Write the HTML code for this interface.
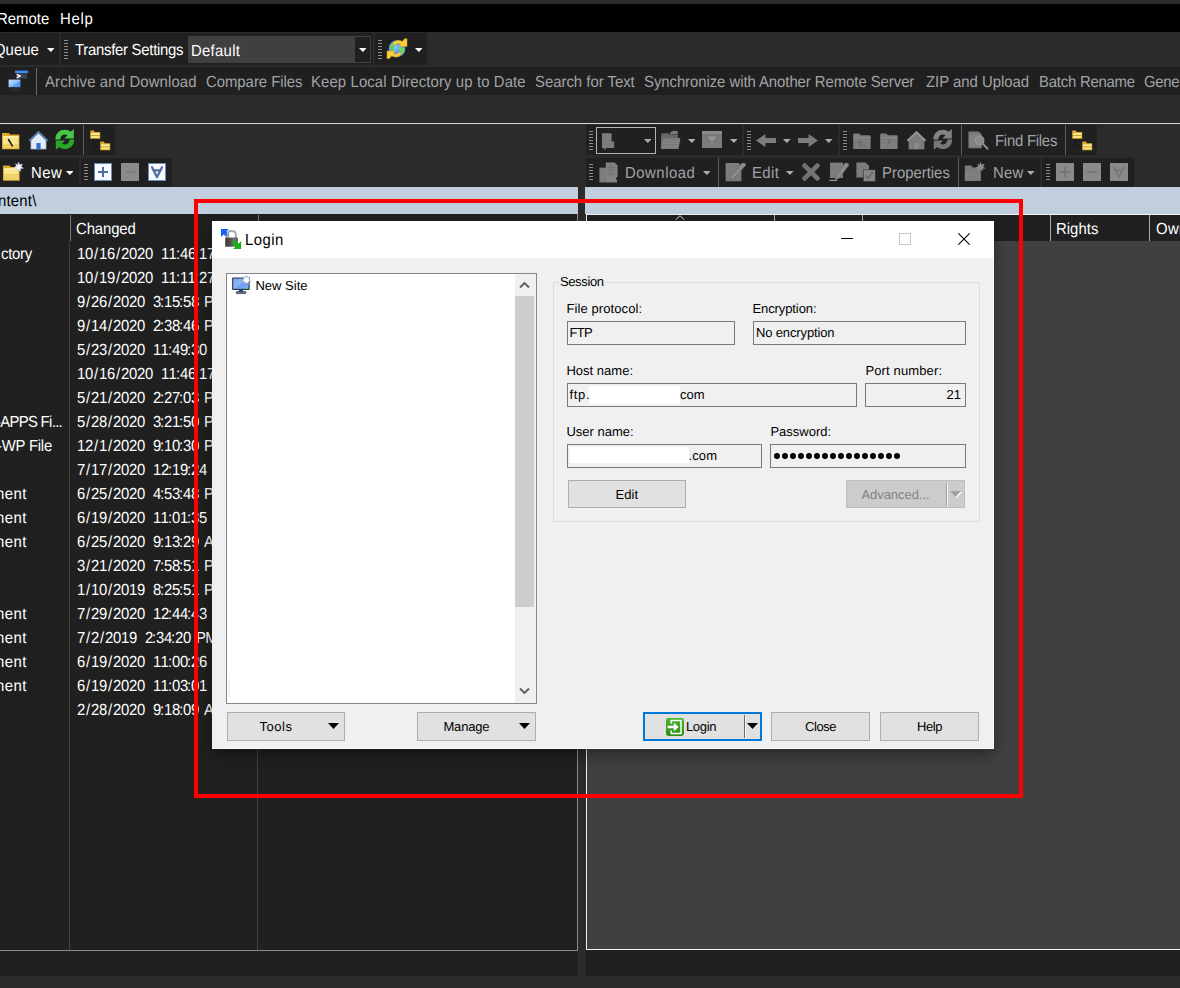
<!DOCTYPE html>
<html><head><meta charset="utf-8"><title>WinSCP Login</title>
<style>
html,body{margin:0;padding:0;}
body{width:1180px;height:988px;overflow:hidden;background:#2b2b2b;position:relative;font-family:"Liberation Sans", sans-serif;}
body div,body span,body svg{position:absolute;box-sizing:border-box;}
span{white-space:pre;text-rendering:geometricPrecision;}
</style></head><body>
<div style="left:0px;top:0px;width:1180px;height:4px;background:#2b2b2b;"></div>
<div style="left:0px;top:4px;width:1180px;height:28px;background:#000000;"></div>
<span style="left:-3.17px;top:12.00px;font-size:16px;line-height:16px;color:#ffffff;letter-spacing:0.049px;transform:scaleX(0.93);transform-origin:0 0;">Remote</span>
<span style="left:59.83px;top:12.00px;font-size:16px;line-height:16px;color:#ffffff;letter-spacing:0.802px;transform:scaleX(0.93);transform-origin:0 0;">Help</span>
<div style="left:0px;top:33px;width:59px;height:32px;background:#202020;"></div>
<div style="left:61px;top:33px;width:312px;height:32px;background:#202020;"></div>
<div style="left:375px;top:33px;width:52px;height:32px;background:#202020;"></div>
<span style="left:-6.17px;top:43.00px;font-size:16px;line-height:16px;color:#ffffff;letter-spacing:0.042px;transform:scaleX(0.93);transform-origin:0 0;">Queue</span>
<svg style="left:46.7px;top:48.0px;" width="7.6" height="4" viewBox="0 0 7.6 4"><polygon points="0,0 7.6,0 3.8,4" fill="#ffffff"/></svg>
<div style="left:64px;top:40px;width:4px;height:1px;background:#8c8c8c;"></div>
<div style="left:64px;top:43px;width:4px;height:1px;background:#8c8c8c;"></div>
<div style="left:64px;top:46px;width:4px;height:1px;background:#8c8c8c;"></div>
<div style="left:64px;top:49px;width:4px;height:1px;background:#8c8c8c;"></div>
<div style="left:64px;top:52px;width:4px;height:1px;background:#8c8c8c;"></div>
<div style="left:64px;top:55px;width:4px;height:1px;background:#8c8c8c;"></div>
<div style="left:64px;top:58px;width:4px;height:1px;background:#8c8c8c;"></div>
<span style="left:74.83px;top:43.00px;font-size:16px;line-height:16px;color:#ffffff;letter-spacing:-0.283px;transform:scaleX(0.93);transform-origin:0 0;">Transfer Settings</span>
<div style="left:188px;top:36px;width:183px;height:27px;background:#404040;"></div>
<div style="left:355px;top:37px;width:15px;height:25px;background:#202020;"></div>
<span style="left:190.93px;top:44.00px;font-size:16px;line-height:16px;color:#ffffff;letter-spacing:0.320px;transform:scaleX(0.93);transform-origin:0 0;">Default</span>
<svg style="left:358.7px;top:48.0px;" width="7.6" height="4" viewBox="0 0 7.6 4"><polygon points="0,0 7.6,0 3.8,4" fill="#ffffff"/></svg>
<div style="left:378px;top:40px;width:4px;height:1px;background:#8c8c8c;"></div>
<div style="left:378px;top:43px;width:4px;height:1px;background:#8c8c8c;"></div>
<div style="left:378px;top:46px;width:4px;height:1px;background:#8c8c8c;"></div>
<div style="left:378px;top:49px;width:4px;height:1px;background:#8c8c8c;"></div>
<div style="left:378px;top:52px;width:4px;height:1px;background:#8c8c8c;"></div>
<div style="left:378px;top:55px;width:4px;height:1px;background:#8c8c8c;"></div>
<div style="left:378px;top:58px;width:4px;height:1px;background:#8c8c8c;"></div>
<svg style="left:414.7px;top:48.0px;" width="7.6" height="4" viewBox="0 0 7.6 4"><polygon points="0,0 7.6,0 3.8,4" fill="#ffffff"/></svg>
<div style="left:0px;top:67px;width:1180px;height:28px;background:#202020;"></div>
<div style="left:36px;top:68px;width:1px;height:27px;background:#6a6a6a;"></div>
<span style="left:44.83px;top:75.00px;font-size:16px;line-height:16px;color:#a1a3a6;letter-spacing:0.150px;transform:scaleX(0.93);transform-origin:0 0;">Archive and Download</span>
<span style="left:205.83px;top:75.00px;font-size:16px;line-height:16px;color:#a1a3a6;letter-spacing:-0.019px;transform:scaleX(0.93);transform-origin:0 0;">Compare Files</span>
<span style="left:311.03px;top:75.00px;font-size:16px;line-height:16px;color:#a1a3a6;letter-spacing:0.133px;transform:scaleX(0.93);transform-origin:0 0;">Keep Local Directory up to Date</span>
<span style="left:535.43px;top:75.00px;font-size:16px;line-height:16px;color:#a1a3a6;letter-spacing:-0.005px;transform:scaleX(0.93);transform-origin:0 0;">Search for Text</span>
<span style="left:644.33px;top:75.00px;font-size:16px;line-height:16px;color:#a1a3a6;letter-spacing:-0.052px;transform:scaleX(0.93);transform-origin:0 0;">Synchronize with Another Remote Server</span>
<span style="left:925.73px;top:75.00px;font-size:16px;line-height:16px;color:#a1a3a6;letter-spacing:-0.007px;transform:scaleX(0.93);transform-origin:0 0;">ZIP and Upload</span>
<span style="left:1038.53px;top:75.00px;font-size:16px;line-height:16px;color:#a1a3a6;letter-spacing:-0.234px;transform:scaleX(0.93);transform-origin:0 0;">Batch Rename</span>
<span style="left:1144.33px;top:75.00px;font-size:16px;line-height:16px;color:#a1a3a6;letter-spacing:-0.286px;transform:scaleX(0.93);transform-origin:0 0;">General</span>
<div style="left:0px;top:123px;width:1180px;height:1px;background:#d6d6d6;"></div>
<div style="left:0px;top:125px;width:115px;height:30px;background:#202020;"></div>
<div style="left:83px;top:125px;width:1px;height:30px;background:#5e5e5e;"></div>
<div style="left:0px;top:158px;width:79px;height:29px;background:#202020;"></div>
<div style="left:81px;top:158px;width:91px;height:29px;background:#202020;"></div>
<span style="left:30.83px;top:166.00px;font-size:16px;line-height:16px;color:#ffffff;letter-spacing:0.572px;transform:scaleX(0.93);transform-origin:0 0;">New</span>
<svg style="left:65.7px;top:171.0px;" width="7.6" height="4" viewBox="0 0 7.6 4"><polygon points="0,0 7.6,0 3.8,4" fill="#ffffff"/></svg>
<div style="left:84px;top:164px;width:4px;height:1px;background:#8c8c8c;"></div>
<div style="left:84px;top:167px;width:4px;height:1px;background:#8c8c8c;"></div>
<div style="left:84px;top:170px;width:4px;height:1px;background:#8c8c8c;"></div>
<div style="left:84px;top:173px;width:4px;height:1px;background:#8c8c8c;"></div>
<div style="left:84px;top:176px;width:4px;height:1px;background:#8c8c8c;"></div>
<div style="left:84px;top:179px;width:4px;height:1px;background:#8c8c8c;"></div>
<div style="left:0px;top:187px;width:578px;height:27px;background:#c1cedd;"></div>
<span style="left:-1.67px;top:194.00px;font-size:16px;line-height:16px;color:#000000;letter-spacing:0.239px;transform:scaleX(0.93);transform-origin:0 0;">ntent\</span>
<div style="left:0px;top:214px;width:578px;height:737px;background:#202020;"></div>
<div style="left:69px;top:241px;width:1px;height:709px;background:#414143;"></div>
<div style="left:257px;top:241px;width:1px;height:709px;background:#414143;"></div>
<div style="left:70px;top:215px;width:1px;height:26px;background:#7c7c7c;"></div>
<div style="left:258px;top:215px;width:1px;height:26px;background:#7c7c7c;"></div>
<div style="left:577px;top:214px;width:1px;height:737px;background:#8c8c8c;"></div>
<div style="left:0px;top:950px;width:578px;height:1px;background:#8c8c8c;"></div>
<span style="left:76.33px;top:222.00px;font-size:16px;line-height:16px;color:#ffffff;letter-spacing:-0.102px;transform:scaleX(0.93);transform-origin:0 0;">Changed</span>
<span style="left:0.50px;top:247.00px;font-size:16px;line-height:16px;color:#ffffff;letter-spacing:-0.268px;transform:scaleX(0.93);transform-origin:0 0;">ctory</span>
<span style="left:77.00px;top:247.00px;font-size:16px;line-height:16px;color:#ffffff;letter-spacing:-0.296px;transform:scaleX(0.93);transform-origin:0 0;">10</span>
<span style="left:93.93px;top:247.00px;font-size:16px;line-height:16px;color:#ffffff;transform:scaleX(0.93);transform-origin:0 0;">/</span>
<span style="left:99.00px;top:247.00px;font-size:16px;line-height:16px;color:#ffffff;letter-spacing:-0.296px;transform:scaleX(0.93);transform-origin:0 0;">16</span>
<span style="left:115.93px;top:247.00px;font-size:16px;line-height:16px;color:#ffffff;transform:scaleX(0.93);transform-origin:0 0;">/</span>
<span style="left:121.00px;top:247.00px;font-size:16px;line-height:16px;color:#ffffff;letter-spacing:-0.296px;transform:scaleX(0.93);transform-origin:0 0;">2020</span>
<span style="left:161.00px;top:247.00px;font-size:16px;line-height:16px;color:#ffffff;letter-spacing:0.297px;transform:scaleX(0.93);transform-origin:0 0;">11</span>
<span style="left:176.43px;top:247.00px;font-size:16px;line-height:16px;color:#ffffff;transform:scaleX(0.93);transform-origin:0 0;">:</span>
<span style="left:180.00px;top:247.00px;font-size:16px;line-height:16px;color:#ffffff;letter-spacing:-0.296px;transform:scaleX(0.93);transform-origin:0 0;">46</span>
<span style="left:195.43px;top:247.00px;font-size:16px;line-height:16px;color:#ffffff;transform:scaleX(0.93);transform-origin:0 0;">:</span>
<span style="left:199.00px;top:247.00px;font-size:16px;line-height:16px;color:#ffffff;letter-spacing:-0.296px;transform:scaleX(0.93);transform-origin:0 0;">17</span>
<span style="left:219.80px;top:247.00px;font-size:16px;line-height:16px;color:#ffffff;letter-spacing:0.366px;transform:scaleX(0.93);transform-origin:0 0;">AM</span>
<span style="left:77.00px;top:271.00px;font-size:16px;line-height:16px;color:#ffffff;letter-spacing:-0.296px;transform:scaleX(0.93);transform-origin:0 0;">10</span>
<span style="left:93.93px;top:271.00px;font-size:16px;line-height:16px;color:#ffffff;transform:scaleX(0.93);transform-origin:0 0;">/</span>
<span style="left:99.00px;top:271.00px;font-size:16px;line-height:16px;color:#ffffff;letter-spacing:-0.296px;transform:scaleX(0.93);transform-origin:0 0;">19</span>
<span style="left:115.93px;top:271.00px;font-size:16px;line-height:16px;color:#ffffff;transform:scaleX(0.93);transform-origin:0 0;">/</span>
<span style="left:121.00px;top:271.00px;font-size:16px;line-height:16px;color:#ffffff;letter-spacing:-0.296px;transform:scaleX(0.93);transform-origin:0 0;">2020</span>
<span style="left:161.00px;top:271.00px;font-size:16px;line-height:16px;color:#ffffff;letter-spacing:0.297px;transform:scaleX(0.93);transform-origin:0 0;">11</span>
<span style="left:176.43px;top:271.00px;font-size:16px;line-height:16px;color:#ffffff;transform:scaleX(0.93);transform-origin:0 0;">:</span>
<span style="left:180.00px;top:271.00px;font-size:16px;line-height:16px;color:#ffffff;letter-spacing:0.297px;transform:scaleX(0.93);transform-origin:0 0;">11</span>
<span style="left:195.43px;top:271.00px;font-size:16px;line-height:16px;color:#ffffff;transform:scaleX(0.93);transform-origin:0 0;">:</span>
<span style="left:199.00px;top:271.00px;font-size:16px;line-height:16px;color:#ffffff;letter-spacing:-0.296px;transform:scaleX(0.93);transform-origin:0 0;">27</span>
<span style="left:219.80px;top:271.00px;font-size:16px;line-height:16px;color:#ffffff;letter-spacing:0.366px;transform:scaleX(0.93);transform-origin:0 0;">AM</span>
<span style="left:77.00px;top:295.00px;font-size:16px;line-height:16px;color:#ffffff;transform:scaleX(0.93);transform-origin:0 0;">9</span>
<span style="left:85.93px;top:295.00px;font-size:16px;line-height:16px;color:#ffffff;transform:scaleX(0.93);transform-origin:0 0;">/</span>
<span style="left:91.00px;top:295.00px;font-size:16px;line-height:16px;color:#ffffff;letter-spacing:-0.296px;transform:scaleX(0.93);transform-origin:0 0;">26</span>
<span style="left:107.93px;top:295.00px;font-size:16px;line-height:16px;color:#ffffff;transform:scaleX(0.93);transform-origin:0 0;">/</span>
<span style="left:113.00px;top:295.00px;font-size:16px;line-height:16px;color:#ffffff;letter-spacing:-0.296px;transform:scaleX(0.93);transform-origin:0 0;">2020</span>
<span style="left:153.00px;top:295.00px;font-size:16px;line-height:16px;color:#ffffff;transform:scaleX(0.93);transform-origin:0 0;">3</span>
<span style="left:160.43px;top:295.00px;font-size:16px;line-height:16px;color:#ffffff;transform:scaleX(0.93);transform-origin:0 0;">:</span>
<span style="left:164.00px;top:295.00px;font-size:16px;line-height:16px;color:#ffffff;letter-spacing:-0.296px;transform:scaleX(0.93);transform-origin:0 0;">15</span>
<span style="left:179.43px;top:295.00px;font-size:16px;line-height:16px;color:#ffffff;transform:scaleX(0.93);transform-origin:0 0;">:</span>
<span style="left:183.00px;top:295.00px;font-size:16px;line-height:16px;color:#ffffff;letter-spacing:-0.296px;transform:scaleX(0.93);transform-origin:0 0;">58</span>
<span style="left:203.80px;top:295.00px;font-size:16px;line-height:16px;color:#ffffff;letter-spacing:-0.710px;transform:scaleX(0.93);transform-origin:0 0;">PM</span>
<span style="left:77.00px;top:319.00px;font-size:16px;line-height:16px;color:#ffffff;transform:scaleX(0.93);transform-origin:0 0;">9</span>
<span style="left:85.93px;top:319.00px;font-size:16px;line-height:16px;color:#ffffff;transform:scaleX(0.93);transform-origin:0 0;">/</span>
<span style="left:91.00px;top:319.00px;font-size:16px;line-height:16px;color:#ffffff;letter-spacing:-0.296px;transform:scaleX(0.93);transform-origin:0 0;">14</span>
<span style="left:107.93px;top:319.00px;font-size:16px;line-height:16px;color:#ffffff;transform:scaleX(0.93);transform-origin:0 0;">/</span>
<span style="left:113.00px;top:319.00px;font-size:16px;line-height:16px;color:#ffffff;letter-spacing:-0.296px;transform:scaleX(0.93);transform-origin:0 0;">2020</span>
<span style="left:153.00px;top:319.00px;font-size:16px;line-height:16px;color:#ffffff;transform:scaleX(0.93);transform-origin:0 0;">2</span>
<span style="left:160.43px;top:319.00px;font-size:16px;line-height:16px;color:#ffffff;transform:scaleX(0.93);transform-origin:0 0;">:</span>
<span style="left:164.00px;top:319.00px;font-size:16px;line-height:16px;color:#ffffff;letter-spacing:-0.296px;transform:scaleX(0.93);transform-origin:0 0;">38</span>
<span style="left:179.43px;top:319.00px;font-size:16px;line-height:16px;color:#ffffff;transform:scaleX(0.93);transform-origin:0 0;">:</span>
<span style="left:183.00px;top:319.00px;font-size:16px;line-height:16px;color:#ffffff;letter-spacing:-0.296px;transform:scaleX(0.93);transform-origin:0 0;">46</span>
<span style="left:203.80px;top:319.00px;font-size:16px;line-height:16px;color:#ffffff;letter-spacing:-0.710px;transform:scaleX(0.93);transform-origin:0 0;">PM</span>
<span style="left:77.00px;top:343.00px;font-size:16px;line-height:16px;color:#ffffff;transform:scaleX(0.93);transform-origin:0 0;">5</span>
<span style="left:85.93px;top:343.00px;font-size:16px;line-height:16px;color:#ffffff;transform:scaleX(0.93);transform-origin:0 0;">/</span>
<span style="left:91.00px;top:343.00px;font-size:16px;line-height:16px;color:#ffffff;letter-spacing:-0.296px;transform:scaleX(0.93);transform-origin:0 0;">23</span>
<span style="left:107.93px;top:343.00px;font-size:16px;line-height:16px;color:#ffffff;transform:scaleX(0.93);transform-origin:0 0;">/</span>
<span style="left:113.00px;top:343.00px;font-size:16px;line-height:16px;color:#ffffff;letter-spacing:-0.296px;transform:scaleX(0.93);transform-origin:0 0;">2020</span>
<span style="left:153.00px;top:343.00px;font-size:16px;line-height:16px;color:#ffffff;letter-spacing:0.297px;transform:scaleX(0.93);transform-origin:0 0;">11</span>
<span style="left:168.43px;top:343.00px;font-size:16px;line-height:16px;color:#ffffff;transform:scaleX(0.93);transform-origin:0 0;">:</span>
<span style="left:172.00px;top:343.00px;font-size:16px;line-height:16px;color:#ffffff;letter-spacing:-0.296px;transform:scaleX(0.93);transform-origin:0 0;">49</span>
<span style="left:187.43px;top:343.00px;font-size:16px;line-height:16px;color:#ffffff;transform:scaleX(0.93);transform-origin:0 0;">:</span>
<span style="left:191.00px;top:343.00px;font-size:16px;line-height:16px;color:#ffffff;letter-spacing:-0.296px;transform:scaleX(0.93);transform-origin:0 0;">30</span>
<span style="left:211.80px;top:343.00px;font-size:16px;line-height:16px;color:#ffffff;letter-spacing:0.366px;transform:scaleX(0.93);transform-origin:0 0;">AM</span>
<span style="left:77.00px;top:367.00px;font-size:16px;line-height:16px;color:#ffffff;letter-spacing:-0.296px;transform:scaleX(0.93);transform-origin:0 0;">10</span>
<span style="left:93.93px;top:367.00px;font-size:16px;line-height:16px;color:#ffffff;transform:scaleX(0.93);transform-origin:0 0;">/</span>
<span style="left:99.00px;top:367.00px;font-size:16px;line-height:16px;color:#ffffff;letter-spacing:-0.296px;transform:scaleX(0.93);transform-origin:0 0;">16</span>
<span style="left:115.93px;top:367.00px;font-size:16px;line-height:16px;color:#ffffff;transform:scaleX(0.93);transform-origin:0 0;">/</span>
<span style="left:121.00px;top:367.00px;font-size:16px;line-height:16px;color:#ffffff;letter-spacing:-0.296px;transform:scaleX(0.93);transform-origin:0 0;">2020</span>
<span style="left:161.00px;top:367.00px;font-size:16px;line-height:16px;color:#ffffff;letter-spacing:0.297px;transform:scaleX(0.93);transform-origin:0 0;">11</span>
<span style="left:176.43px;top:367.00px;font-size:16px;line-height:16px;color:#ffffff;transform:scaleX(0.93);transform-origin:0 0;">:</span>
<span style="left:180.00px;top:367.00px;font-size:16px;line-height:16px;color:#ffffff;letter-spacing:-0.296px;transform:scaleX(0.93);transform-origin:0 0;">46</span>
<span style="left:195.43px;top:367.00px;font-size:16px;line-height:16px;color:#ffffff;transform:scaleX(0.93);transform-origin:0 0;">:</span>
<span style="left:199.00px;top:367.00px;font-size:16px;line-height:16px;color:#ffffff;letter-spacing:-0.296px;transform:scaleX(0.93);transform-origin:0 0;">17</span>
<span style="left:219.80px;top:367.00px;font-size:16px;line-height:16px;color:#ffffff;letter-spacing:0.366px;transform:scaleX(0.93);transform-origin:0 0;">AM</span>
<span style="left:77.00px;top:391.00px;font-size:16px;line-height:16px;color:#ffffff;transform:scaleX(0.93);transform-origin:0 0;">5</span>
<span style="left:85.93px;top:391.00px;font-size:16px;line-height:16px;color:#ffffff;transform:scaleX(0.93);transform-origin:0 0;">/</span>
<span style="left:91.00px;top:391.00px;font-size:16px;line-height:16px;color:#ffffff;letter-spacing:-0.296px;transform:scaleX(0.93);transform-origin:0 0;">21</span>
<span style="left:107.93px;top:391.00px;font-size:16px;line-height:16px;color:#ffffff;transform:scaleX(0.93);transform-origin:0 0;">/</span>
<span style="left:113.00px;top:391.00px;font-size:16px;line-height:16px;color:#ffffff;letter-spacing:-0.296px;transform:scaleX(0.93);transform-origin:0 0;">2020</span>
<span style="left:153.00px;top:391.00px;font-size:16px;line-height:16px;color:#ffffff;transform:scaleX(0.93);transform-origin:0 0;">2</span>
<span style="left:160.43px;top:391.00px;font-size:16px;line-height:16px;color:#ffffff;transform:scaleX(0.93);transform-origin:0 0;">:</span>
<span style="left:164.00px;top:391.00px;font-size:16px;line-height:16px;color:#ffffff;letter-spacing:-0.296px;transform:scaleX(0.93);transform-origin:0 0;">27</span>
<span style="left:179.43px;top:391.00px;font-size:16px;line-height:16px;color:#ffffff;transform:scaleX(0.93);transform-origin:0 0;">:</span>
<span style="left:183.00px;top:391.00px;font-size:16px;line-height:16px;color:#ffffff;letter-spacing:-0.296px;transform:scaleX(0.93);transform-origin:0 0;">03</span>
<span style="left:203.80px;top:391.00px;font-size:16px;line-height:16px;color:#ffffff;letter-spacing:-0.710px;transform:scaleX(0.93);transform-origin:0 0;">PM</span>
<span style="left:-4.00px;top:415.00px;font-size:16px;line-height:16px;color:#ffffff;letter-spacing:-0.765px;transform:scaleX(0.93);transform-origin:0 0;">-APPS Fi</span>
<span style="left:51.60px;top:415.00px;font-size:16px;line-height:16px;color:#ffffff;letter-spacing:-1.007px;transform:scaleX(0.93);transform-origin:0 0;">...</span>
<span style="left:77.00px;top:415.00px;font-size:16px;line-height:16px;color:#ffffff;transform:scaleX(0.93);transform-origin:0 0;">5</span>
<span style="left:85.93px;top:415.00px;font-size:16px;line-height:16px;color:#ffffff;transform:scaleX(0.93);transform-origin:0 0;">/</span>
<span style="left:91.00px;top:415.00px;font-size:16px;line-height:16px;color:#ffffff;letter-spacing:-0.296px;transform:scaleX(0.93);transform-origin:0 0;">28</span>
<span style="left:107.93px;top:415.00px;font-size:16px;line-height:16px;color:#ffffff;transform:scaleX(0.93);transform-origin:0 0;">/</span>
<span style="left:113.00px;top:415.00px;font-size:16px;line-height:16px;color:#ffffff;letter-spacing:-0.296px;transform:scaleX(0.93);transform-origin:0 0;">2020</span>
<span style="left:153.00px;top:415.00px;font-size:16px;line-height:16px;color:#ffffff;transform:scaleX(0.93);transform-origin:0 0;">3</span>
<span style="left:160.43px;top:415.00px;font-size:16px;line-height:16px;color:#ffffff;transform:scaleX(0.93);transform-origin:0 0;">:</span>
<span style="left:164.00px;top:415.00px;font-size:16px;line-height:16px;color:#ffffff;letter-spacing:-0.296px;transform:scaleX(0.93);transform-origin:0 0;">21</span>
<span style="left:179.43px;top:415.00px;font-size:16px;line-height:16px;color:#ffffff;transform:scaleX(0.93);transform-origin:0 0;">:</span>
<span style="left:183.00px;top:415.00px;font-size:16px;line-height:16px;color:#ffffff;letter-spacing:-0.296px;transform:scaleX(0.93);transform-origin:0 0;">50</span>
<span style="left:203.80px;top:415.00px;font-size:16px;line-height:16px;color:#ffffff;letter-spacing:-0.710px;transform:scaleX(0.93);transform-origin:0 0;">PM</span>
<span style="left:-3.00px;top:439.00px;font-size:16px;line-height:16px;color:#ffffff;letter-spacing:-0.238px;transform:scaleX(0.93);transform-origin:0 0;">-WP File</span>
<span style="left:77.00px;top:439.00px;font-size:16px;line-height:16px;color:#ffffff;letter-spacing:-0.296px;transform:scaleX(0.93);transform-origin:0 0;">12</span>
<span style="left:93.93px;top:439.00px;font-size:16px;line-height:16px;color:#ffffff;transform:scaleX(0.93);transform-origin:0 0;">/</span>
<span style="left:99.00px;top:439.00px;font-size:16px;line-height:16px;color:#ffffff;transform:scaleX(0.93);transform-origin:0 0;">1</span>
<span style="left:107.93px;top:439.00px;font-size:16px;line-height:16px;color:#ffffff;transform:scaleX(0.93);transform-origin:0 0;">/</span>
<span style="left:113.00px;top:439.00px;font-size:16px;line-height:16px;color:#ffffff;letter-spacing:-0.296px;transform:scaleX(0.93);transform-origin:0 0;">2020</span>
<span style="left:153.00px;top:439.00px;font-size:16px;line-height:16px;color:#ffffff;transform:scaleX(0.93);transform-origin:0 0;">9</span>
<span style="left:160.43px;top:439.00px;font-size:16px;line-height:16px;color:#ffffff;transform:scaleX(0.93);transform-origin:0 0;">:</span>
<span style="left:164.00px;top:439.00px;font-size:16px;line-height:16px;color:#ffffff;letter-spacing:-0.296px;transform:scaleX(0.93);transform-origin:0 0;">10</span>
<span style="left:179.43px;top:439.00px;font-size:16px;line-height:16px;color:#ffffff;transform:scaleX(0.93);transform-origin:0 0;">:</span>
<span style="left:183.00px;top:439.00px;font-size:16px;line-height:16px;color:#ffffff;letter-spacing:-0.296px;transform:scaleX(0.93);transform-origin:0 0;">30</span>
<span style="left:203.80px;top:439.00px;font-size:16px;line-height:16px;color:#ffffff;letter-spacing:-0.710px;transform:scaleX(0.93);transform-origin:0 0;">PM</span>
<span style="left:77.00px;top:463.00px;font-size:16px;line-height:16px;color:#ffffff;transform:scaleX(0.93);transform-origin:0 0;">7</span>
<span style="left:85.93px;top:463.00px;font-size:16px;line-height:16px;color:#ffffff;transform:scaleX(0.93);transform-origin:0 0;">/</span>
<span style="left:91.00px;top:463.00px;font-size:16px;line-height:16px;color:#ffffff;letter-spacing:-0.296px;transform:scaleX(0.93);transform-origin:0 0;">17</span>
<span style="left:107.93px;top:463.00px;font-size:16px;line-height:16px;color:#ffffff;transform:scaleX(0.93);transform-origin:0 0;">/</span>
<span style="left:113.00px;top:463.00px;font-size:16px;line-height:16px;color:#ffffff;letter-spacing:-0.296px;transform:scaleX(0.93);transform-origin:0 0;">2020</span>
<span style="left:153.00px;top:463.00px;font-size:16px;line-height:16px;color:#ffffff;letter-spacing:-0.296px;transform:scaleX(0.93);transform-origin:0 0;">12</span>
<span style="left:168.43px;top:463.00px;font-size:16px;line-height:16px;color:#ffffff;transform:scaleX(0.93);transform-origin:0 0;">:</span>
<span style="left:172.00px;top:463.00px;font-size:16px;line-height:16px;color:#ffffff;letter-spacing:-0.296px;transform:scaleX(0.93);transform-origin:0 0;">19</span>
<span style="left:187.43px;top:463.00px;font-size:16px;line-height:16px;color:#ffffff;transform:scaleX(0.93);transform-origin:0 0;">:</span>
<span style="left:191.00px;top:463.00px;font-size:16px;line-height:16px;color:#ffffff;letter-spacing:-0.296px;transform:scaleX(0.93);transform-origin:0 0;">24</span>
<span style="left:211.80px;top:463.00px;font-size:16px;line-height:16px;color:#ffffff;letter-spacing:-0.710px;transform:scaleX(0.93);transform-origin:0 0;">PM</span>
<span style="left:-3.60px;top:487.00px;font-size:16px;line-height:16px;color:#ffffff;letter-spacing:0.494px;transform:scaleX(0.93);transform-origin:0 0;">nent</span>
<span style="left:77.00px;top:487.00px;font-size:16px;line-height:16px;color:#ffffff;transform:scaleX(0.93);transform-origin:0 0;">6</span>
<span style="left:85.93px;top:487.00px;font-size:16px;line-height:16px;color:#ffffff;transform:scaleX(0.93);transform-origin:0 0;">/</span>
<span style="left:91.00px;top:487.00px;font-size:16px;line-height:16px;color:#ffffff;letter-spacing:-0.296px;transform:scaleX(0.93);transform-origin:0 0;">25</span>
<span style="left:107.93px;top:487.00px;font-size:16px;line-height:16px;color:#ffffff;transform:scaleX(0.93);transform-origin:0 0;">/</span>
<span style="left:113.00px;top:487.00px;font-size:16px;line-height:16px;color:#ffffff;letter-spacing:-0.296px;transform:scaleX(0.93);transform-origin:0 0;">2020</span>
<span style="left:153.00px;top:487.00px;font-size:16px;line-height:16px;color:#ffffff;transform:scaleX(0.93);transform-origin:0 0;">4</span>
<span style="left:160.43px;top:487.00px;font-size:16px;line-height:16px;color:#ffffff;transform:scaleX(0.93);transform-origin:0 0;">:</span>
<span style="left:164.00px;top:487.00px;font-size:16px;line-height:16px;color:#ffffff;letter-spacing:-0.296px;transform:scaleX(0.93);transform-origin:0 0;">53</span>
<span style="left:179.43px;top:487.00px;font-size:16px;line-height:16px;color:#ffffff;transform:scaleX(0.93);transform-origin:0 0;">:</span>
<span style="left:183.00px;top:487.00px;font-size:16px;line-height:16px;color:#ffffff;letter-spacing:-0.296px;transform:scaleX(0.93);transform-origin:0 0;">48</span>
<span style="left:203.80px;top:487.00px;font-size:16px;line-height:16px;color:#ffffff;letter-spacing:-0.710px;transform:scaleX(0.93);transform-origin:0 0;">PM</span>
<span style="left:-3.60px;top:511.00px;font-size:16px;line-height:16px;color:#ffffff;letter-spacing:0.494px;transform:scaleX(0.93);transform-origin:0 0;">nent</span>
<span style="left:77.00px;top:511.00px;font-size:16px;line-height:16px;color:#ffffff;transform:scaleX(0.93);transform-origin:0 0;">6</span>
<span style="left:85.93px;top:511.00px;font-size:16px;line-height:16px;color:#ffffff;transform:scaleX(0.93);transform-origin:0 0;">/</span>
<span style="left:91.00px;top:511.00px;font-size:16px;line-height:16px;color:#ffffff;letter-spacing:-0.296px;transform:scaleX(0.93);transform-origin:0 0;">19</span>
<span style="left:107.93px;top:511.00px;font-size:16px;line-height:16px;color:#ffffff;transform:scaleX(0.93);transform-origin:0 0;">/</span>
<span style="left:113.00px;top:511.00px;font-size:16px;line-height:16px;color:#ffffff;letter-spacing:-0.296px;transform:scaleX(0.93);transform-origin:0 0;">2020</span>
<span style="left:153.00px;top:511.00px;font-size:16px;line-height:16px;color:#ffffff;letter-spacing:0.297px;transform:scaleX(0.93);transform-origin:0 0;">11</span>
<span style="left:168.43px;top:511.00px;font-size:16px;line-height:16px;color:#ffffff;transform:scaleX(0.93);transform-origin:0 0;">:</span>
<span style="left:172.00px;top:511.00px;font-size:16px;line-height:16px;color:#ffffff;letter-spacing:-0.296px;transform:scaleX(0.93);transform-origin:0 0;">01</span>
<span style="left:187.43px;top:511.00px;font-size:16px;line-height:16px;color:#ffffff;transform:scaleX(0.93);transform-origin:0 0;">:</span>
<span style="left:191.00px;top:511.00px;font-size:16px;line-height:16px;color:#ffffff;letter-spacing:-0.296px;transform:scaleX(0.93);transform-origin:0 0;">35</span>
<span style="left:211.80px;top:511.00px;font-size:16px;line-height:16px;color:#ffffff;letter-spacing:0.366px;transform:scaleX(0.93);transform-origin:0 0;">AM</span>
<span style="left:-3.60px;top:535.00px;font-size:16px;line-height:16px;color:#ffffff;letter-spacing:0.494px;transform:scaleX(0.93);transform-origin:0 0;">nent</span>
<span style="left:77.00px;top:535.00px;font-size:16px;line-height:16px;color:#ffffff;transform:scaleX(0.93);transform-origin:0 0;">6</span>
<span style="left:85.93px;top:535.00px;font-size:16px;line-height:16px;color:#ffffff;transform:scaleX(0.93);transform-origin:0 0;">/</span>
<span style="left:91.00px;top:535.00px;font-size:16px;line-height:16px;color:#ffffff;letter-spacing:-0.296px;transform:scaleX(0.93);transform-origin:0 0;">25</span>
<span style="left:107.93px;top:535.00px;font-size:16px;line-height:16px;color:#ffffff;transform:scaleX(0.93);transform-origin:0 0;">/</span>
<span style="left:113.00px;top:535.00px;font-size:16px;line-height:16px;color:#ffffff;letter-spacing:-0.296px;transform:scaleX(0.93);transform-origin:0 0;">2020</span>
<span style="left:153.00px;top:535.00px;font-size:16px;line-height:16px;color:#ffffff;transform:scaleX(0.93);transform-origin:0 0;">9</span>
<span style="left:160.43px;top:535.00px;font-size:16px;line-height:16px;color:#ffffff;transform:scaleX(0.93);transform-origin:0 0;">:</span>
<span style="left:164.00px;top:535.00px;font-size:16px;line-height:16px;color:#ffffff;letter-spacing:-0.296px;transform:scaleX(0.93);transform-origin:0 0;">13</span>
<span style="left:179.43px;top:535.00px;font-size:16px;line-height:16px;color:#ffffff;transform:scaleX(0.93);transform-origin:0 0;">:</span>
<span style="left:183.00px;top:535.00px;font-size:16px;line-height:16px;color:#ffffff;letter-spacing:-0.296px;transform:scaleX(0.93);transform-origin:0 0;">29</span>
<span style="left:203.80px;top:535.00px;font-size:16px;line-height:16px;color:#ffffff;letter-spacing:0.366px;transform:scaleX(0.93);transform-origin:0 0;">AM</span>
<span style="left:77.00px;top:559.00px;font-size:16px;line-height:16px;color:#ffffff;transform:scaleX(0.93);transform-origin:0 0;">3</span>
<span style="left:85.93px;top:559.00px;font-size:16px;line-height:16px;color:#ffffff;transform:scaleX(0.93);transform-origin:0 0;">/</span>
<span style="left:91.00px;top:559.00px;font-size:16px;line-height:16px;color:#ffffff;letter-spacing:-0.296px;transform:scaleX(0.93);transform-origin:0 0;">21</span>
<span style="left:107.93px;top:559.00px;font-size:16px;line-height:16px;color:#ffffff;transform:scaleX(0.93);transform-origin:0 0;">/</span>
<span style="left:113.00px;top:559.00px;font-size:16px;line-height:16px;color:#ffffff;letter-spacing:-0.296px;transform:scaleX(0.93);transform-origin:0 0;">2020</span>
<span style="left:153.00px;top:559.00px;font-size:16px;line-height:16px;color:#ffffff;transform:scaleX(0.93);transform-origin:0 0;">7</span>
<span style="left:160.43px;top:559.00px;font-size:16px;line-height:16px;color:#ffffff;transform:scaleX(0.93);transform-origin:0 0;">:</span>
<span style="left:164.00px;top:559.00px;font-size:16px;line-height:16px;color:#ffffff;letter-spacing:-0.296px;transform:scaleX(0.93);transform-origin:0 0;">58</span>
<span style="left:179.43px;top:559.00px;font-size:16px;line-height:16px;color:#ffffff;transform:scaleX(0.93);transform-origin:0 0;">:</span>
<span style="left:183.00px;top:559.00px;font-size:16px;line-height:16px;color:#ffffff;letter-spacing:-0.296px;transform:scaleX(0.93);transform-origin:0 0;">51</span>
<span style="left:203.80px;top:559.00px;font-size:16px;line-height:16px;color:#ffffff;letter-spacing:-0.710px;transform:scaleX(0.93);transform-origin:0 0;">PM</span>
<span style="left:77.00px;top:583.00px;font-size:16px;line-height:16px;color:#ffffff;transform:scaleX(0.93);transform-origin:0 0;">1</span>
<span style="left:85.93px;top:583.00px;font-size:16px;line-height:16px;color:#ffffff;transform:scaleX(0.93);transform-origin:0 0;">/</span>
<span style="left:91.00px;top:583.00px;font-size:16px;line-height:16px;color:#ffffff;letter-spacing:-0.296px;transform:scaleX(0.93);transform-origin:0 0;">10</span>
<span style="left:107.93px;top:583.00px;font-size:16px;line-height:16px;color:#ffffff;transform:scaleX(0.93);transform-origin:0 0;">/</span>
<span style="left:113.00px;top:583.00px;font-size:16px;line-height:16px;color:#ffffff;letter-spacing:-0.296px;transform:scaleX(0.93);transform-origin:0 0;">2019</span>
<span style="left:153.00px;top:583.00px;font-size:16px;line-height:16px;color:#ffffff;transform:scaleX(0.93);transform-origin:0 0;">8</span>
<span style="left:160.43px;top:583.00px;font-size:16px;line-height:16px;color:#ffffff;transform:scaleX(0.93);transform-origin:0 0;">:</span>
<span style="left:164.00px;top:583.00px;font-size:16px;line-height:16px;color:#ffffff;letter-spacing:-0.296px;transform:scaleX(0.93);transform-origin:0 0;">25</span>
<span style="left:179.43px;top:583.00px;font-size:16px;line-height:16px;color:#ffffff;transform:scaleX(0.93);transform-origin:0 0;">:</span>
<span style="left:183.00px;top:583.00px;font-size:16px;line-height:16px;color:#ffffff;letter-spacing:-0.296px;transform:scaleX(0.93);transform-origin:0 0;">51</span>
<span style="left:203.80px;top:583.00px;font-size:16px;line-height:16px;color:#ffffff;letter-spacing:-0.710px;transform:scaleX(0.93);transform-origin:0 0;">PM</span>
<span style="left:-3.60px;top:607.00px;font-size:16px;line-height:16px;color:#ffffff;letter-spacing:0.494px;transform:scaleX(0.93);transform-origin:0 0;">nent</span>
<span style="left:77.00px;top:607.00px;font-size:16px;line-height:16px;color:#ffffff;transform:scaleX(0.93);transform-origin:0 0;">7</span>
<span style="left:85.93px;top:607.00px;font-size:16px;line-height:16px;color:#ffffff;transform:scaleX(0.93);transform-origin:0 0;">/</span>
<span style="left:91.00px;top:607.00px;font-size:16px;line-height:16px;color:#ffffff;letter-spacing:-0.296px;transform:scaleX(0.93);transform-origin:0 0;">29</span>
<span style="left:107.93px;top:607.00px;font-size:16px;line-height:16px;color:#ffffff;transform:scaleX(0.93);transform-origin:0 0;">/</span>
<span style="left:113.00px;top:607.00px;font-size:16px;line-height:16px;color:#ffffff;letter-spacing:-0.296px;transform:scaleX(0.93);transform-origin:0 0;">2020</span>
<span style="left:153.00px;top:607.00px;font-size:16px;line-height:16px;color:#ffffff;letter-spacing:-0.296px;transform:scaleX(0.93);transform-origin:0 0;">12</span>
<span style="left:168.43px;top:607.00px;font-size:16px;line-height:16px;color:#ffffff;transform:scaleX(0.93);transform-origin:0 0;">:</span>
<span style="left:172.00px;top:607.00px;font-size:16px;line-height:16px;color:#ffffff;letter-spacing:-0.296px;transform:scaleX(0.93);transform-origin:0 0;">44</span>
<span style="left:187.43px;top:607.00px;font-size:16px;line-height:16px;color:#ffffff;transform:scaleX(0.93);transform-origin:0 0;">:</span>
<span style="left:191.00px;top:607.00px;font-size:16px;line-height:16px;color:#ffffff;letter-spacing:-0.296px;transform:scaleX(0.93);transform-origin:0 0;">43</span>
<span style="left:211.80px;top:607.00px;font-size:16px;line-height:16px;color:#ffffff;letter-spacing:-0.710px;transform:scaleX(0.93);transform-origin:0 0;">PM</span>
<span style="left:-3.60px;top:631.00px;font-size:16px;line-height:16px;color:#ffffff;letter-spacing:0.494px;transform:scaleX(0.93);transform-origin:0 0;">nent</span>
<span style="left:77.00px;top:631.00px;font-size:16px;line-height:16px;color:#ffffff;transform:scaleX(0.93);transform-origin:0 0;">7</span>
<span style="left:85.93px;top:631.00px;font-size:16px;line-height:16px;color:#ffffff;transform:scaleX(0.93);transform-origin:0 0;">/</span>
<span style="left:91.00px;top:631.00px;font-size:16px;line-height:16px;color:#ffffff;transform:scaleX(0.93);transform-origin:0 0;">2</span>
<span style="left:99.93px;top:631.00px;font-size:16px;line-height:16px;color:#ffffff;transform:scaleX(0.93);transform-origin:0 0;">/</span>
<span style="left:105.00px;top:631.00px;font-size:16px;line-height:16px;color:#ffffff;letter-spacing:-0.296px;transform:scaleX(0.93);transform-origin:0 0;">2019</span>
<span style="left:145.00px;top:631.00px;font-size:16px;line-height:16px;color:#ffffff;transform:scaleX(0.93);transform-origin:0 0;">2</span>
<span style="left:152.43px;top:631.00px;font-size:16px;line-height:16px;color:#ffffff;transform:scaleX(0.93);transform-origin:0 0;">:</span>
<span style="left:156.00px;top:631.00px;font-size:16px;line-height:16px;color:#ffffff;letter-spacing:-0.296px;transform:scaleX(0.93);transform-origin:0 0;">34</span>
<span style="left:171.43px;top:631.00px;font-size:16px;line-height:16px;color:#ffffff;transform:scaleX(0.93);transform-origin:0 0;">:</span>
<span style="left:175.00px;top:631.00px;font-size:16px;line-height:16px;color:#ffffff;letter-spacing:-0.296px;transform:scaleX(0.93);transform-origin:0 0;">20</span>
<span style="left:195.80px;top:631.00px;font-size:16px;line-height:16px;color:#ffffff;letter-spacing:-0.710px;transform:scaleX(0.93);transform-origin:0 0;">PM</span>
<span style="left:-3.60px;top:655.00px;font-size:16px;line-height:16px;color:#ffffff;letter-spacing:0.494px;transform:scaleX(0.93);transform-origin:0 0;">nent</span>
<span style="left:77.00px;top:655.00px;font-size:16px;line-height:16px;color:#ffffff;transform:scaleX(0.93);transform-origin:0 0;">6</span>
<span style="left:85.93px;top:655.00px;font-size:16px;line-height:16px;color:#ffffff;transform:scaleX(0.93);transform-origin:0 0;">/</span>
<span style="left:91.00px;top:655.00px;font-size:16px;line-height:16px;color:#ffffff;letter-spacing:-0.296px;transform:scaleX(0.93);transform-origin:0 0;">19</span>
<span style="left:107.93px;top:655.00px;font-size:16px;line-height:16px;color:#ffffff;transform:scaleX(0.93);transform-origin:0 0;">/</span>
<span style="left:113.00px;top:655.00px;font-size:16px;line-height:16px;color:#ffffff;letter-spacing:-0.296px;transform:scaleX(0.93);transform-origin:0 0;">2020</span>
<span style="left:153.00px;top:655.00px;font-size:16px;line-height:16px;color:#ffffff;letter-spacing:0.297px;transform:scaleX(0.93);transform-origin:0 0;">11</span>
<span style="left:168.43px;top:655.00px;font-size:16px;line-height:16px;color:#ffffff;transform:scaleX(0.93);transform-origin:0 0;">:</span>
<span style="left:172.00px;top:655.00px;font-size:16px;line-height:16px;color:#ffffff;letter-spacing:-0.296px;transform:scaleX(0.93);transform-origin:0 0;">00</span>
<span style="left:187.43px;top:655.00px;font-size:16px;line-height:16px;color:#ffffff;transform:scaleX(0.93);transform-origin:0 0;">:</span>
<span style="left:191.00px;top:655.00px;font-size:16px;line-height:16px;color:#ffffff;letter-spacing:-0.296px;transform:scaleX(0.93);transform-origin:0 0;">26</span>
<span style="left:211.80px;top:655.00px;font-size:16px;line-height:16px;color:#ffffff;letter-spacing:0.366px;transform:scaleX(0.93);transform-origin:0 0;">AM</span>
<span style="left:-3.60px;top:679.00px;font-size:16px;line-height:16px;color:#ffffff;letter-spacing:0.494px;transform:scaleX(0.93);transform-origin:0 0;">nent</span>
<span style="left:77.00px;top:679.00px;font-size:16px;line-height:16px;color:#ffffff;transform:scaleX(0.93);transform-origin:0 0;">6</span>
<span style="left:85.93px;top:679.00px;font-size:16px;line-height:16px;color:#ffffff;transform:scaleX(0.93);transform-origin:0 0;">/</span>
<span style="left:91.00px;top:679.00px;font-size:16px;line-height:16px;color:#ffffff;letter-spacing:-0.296px;transform:scaleX(0.93);transform-origin:0 0;">19</span>
<span style="left:107.93px;top:679.00px;font-size:16px;line-height:16px;color:#ffffff;transform:scaleX(0.93);transform-origin:0 0;">/</span>
<span style="left:113.00px;top:679.00px;font-size:16px;line-height:16px;color:#ffffff;letter-spacing:-0.296px;transform:scaleX(0.93);transform-origin:0 0;">2020</span>
<span style="left:153.00px;top:679.00px;font-size:16px;line-height:16px;color:#ffffff;letter-spacing:0.297px;transform:scaleX(0.93);transform-origin:0 0;">11</span>
<span style="left:168.43px;top:679.00px;font-size:16px;line-height:16px;color:#ffffff;transform:scaleX(0.93);transform-origin:0 0;">:</span>
<span style="left:172.00px;top:679.00px;font-size:16px;line-height:16px;color:#ffffff;letter-spacing:-0.296px;transform:scaleX(0.93);transform-origin:0 0;">03</span>
<span style="left:187.43px;top:679.00px;font-size:16px;line-height:16px;color:#ffffff;transform:scaleX(0.93);transform-origin:0 0;">:</span>
<span style="left:191.00px;top:679.00px;font-size:16px;line-height:16px;color:#ffffff;letter-spacing:-0.296px;transform:scaleX(0.93);transform-origin:0 0;">01</span>
<span style="left:211.80px;top:679.00px;font-size:16px;line-height:16px;color:#ffffff;letter-spacing:0.366px;transform:scaleX(0.93);transform-origin:0 0;">AM</span>
<span style="left:77.00px;top:703.00px;font-size:16px;line-height:16px;color:#ffffff;transform:scaleX(0.93);transform-origin:0 0;">2</span>
<span style="left:85.93px;top:703.00px;font-size:16px;line-height:16px;color:#ffffff;transform:scaleX(0.93);transform-origin:0 0;">/</span>
<span style="left:91.00px;top:703.00px;font-size:16px;line-height:16px;color:#ffffff;letter-spacing:-0.296px;transform:scaleX(0.93);transform-origin:0 0;">28</span>
<span style="left:107.93px;top:703.00px;font-size:16px;line-height:16px;color:#ffffff;transform:scaleX(0.93);transform-origin:0 0;">/</span>
<span style="left:113.00px;top:703.00px;font-size:16px;line-height:16px;color:#ffffff;letter-spacing:-0.296px;transform:scaleX(0.93);transform-origin:0 0;">2020</span>
<span style="left:153.00px;top:703.00px;font-size:16px;line-height:16px;color:#ffffff;transform:scaleX(0.93);transform-origin:0 0;">9</span>
<span style="left:160.43px;top:703.00px;font-size:16px;line-height:16px;color:#ffffff;transform:scaleX(0.93);transform-origin:0 0;">:</span>
<span style="left:164.00px;top:703.00px;font-size:16px;line-height:16px;color:#ffffff;letter-spacing:-0.296px;transform:scaleX(0.93);transform-origin:0 0;">18</span>
<span style="left:179.43px;top:703.00px;font-size:16px;line-height:16px;color:#ffffff;transform:scaleX(0.93);transform-origin:0 0;">:</span>
<span style="left:183.00px;top:703.00px;font-size:16px;line-height:16px;color:#ffffff;letter-spacing:-0.296px;transform:scaleX(0.93);transform-origin:0 0;">09</span>
<span style="left:203.80px;top:703.00px;font-size:16px;line-height:16px;color:#ffffff;letter-spacing:0.366px;transform:scaleX(0.93);transform-origin:0 0;">AM</span>
<div style="left:578px;top:124px;width:8px;height:852px;background:#2b2b2b;"></div>
<div style="left:0px;top:951px;width:578px;height:25px;background:#202020;"></div>
<div style="left:586px;top:950px;width:594px;height:26px;background:#202020;"></div>
<div style="left:0px;top:976px;width:1180px;height:12px;background:#2a2a2a;"></div>
<div style="left:586px;top:125px;width:156px;height:30px;background:#202020;"></div>
<div style="left:744px;top:125px;width:94px;height:30px;background:#202020;"></div>
<div style="left:840px;top:125px;width:257px;height:30px;background:#202020;"></div>
<div style="left:586px;top:158px;width:454px;height:29px;background:#202020;"></div>
<div style="left:1042px;top:158px;width:92px;height:29px;background:#202020;"></div>
<div style="left:589px;top:131px;width:4px;height:1px;background:#8c8c8c;"></div>
<div style="left:589px;top:134px;width:4px;height:1px;background:#8c8c8c;"></div>
<div style="left:589px;top:137px;width:4px;height:1px;background:#8c8c8c;"></div>
<div style="left:589px;top:140px;width:4px;height:1px;background:#8c8c8c;"></div>
<div style="left:589px;top:143px;width:4px;height:1px;background:#8c8c8c;"></div>
<div style="left:589px;top:146px;width:4px;height:1px;background:#8c8c8c;"></div>
<div style="left:589px;top:149px;width:4px;height:1px;background:#8c8c8c;"></div>
<div style="left:596px;top:127px;width:60px;height:27px;background:#202020;border:1px solid #b4b4b4;"></div>
<svg style="left:643.7px;top:139.0px;" width="7.6" height="4" viewBox="0 0 7.6 4"><polygon points="0,0 7.6,0 3.8,4" fill="#adadad"/></svg>
<svg style="left:687.7px;top:139.0px;" width="7.6" height="4" viewBox="0 0 7.6 4"><polygon points="0,0 7.6,0 3.8,4" fill="#adadad"/></svg>
<svg style="left:729.7px;top:139.0px;" width="7.6" height="4" viewBox="0 0 7.6 4"><polygon points="0,0 7.6,0 3.8,4" fill="#adadad"/></svg>
<div style="left:747px;top:131px;width:4px;height:1px;background:#8c8c8c;"></div>
<div style="left:747px;top:134px;width:4px;height:1px;background:#8c8c8c;"></div>
<div style="left:747px;top:137px;width:4px;height:1px;background:#8c8c8c;"></div>
<div style="left:747px;top:140px;width:4px;height:1px;background:#8c8c8c;"></div>
<div style="left:747px;top:143px;width:4px;height:1px;background:#8c8c8c;"></div>
<div style="left:747px;top:146px;width:4px;height:1px;background:#8c8c8c;"></div>
<div style="left:747px;top:149px;width:4px;height:1px;background:#8c8c8c;"></div>
<svg style="left:783.2px;top:139.0px;" width="7.6" height="4" viewBox="0 0 7.6 4"><polygon points="0,0 7.6,0 3.8,4" fill="#adadad"/></svg>
<svg style="left:825.2px;top:139.0px;" width="7.6" height="4" viewBox="0 0 7.6 4"><polygon points="0,0 7.6,0 3.8,4" fill="#adadad"/></svg>
<div style="left:843px;top:131px;width:4px;height:1px;background:#8c8c8c;"></div>
<div style="left:843px;top:134px;width:4px;height:1px;background:#8c8c8c;"></div>
<div style="left:843px;top:137px;width:4px;height:1px;background:#8c8c8c;"></div>
<div style="left:843px;top:140px;width:4px;height:1px;background:#8c8c8c;"></div>
<div style="left:843px;top:143px;width:4px;height:1px;background:#8c8c8c;"></div>
<div style="left:843px;top:146px;width:4px;height:1px;background:#8c8c8c;"></div>
<div style="left:843px;top:149px;width:4px;height:1px;background:#8c8c8c;"></div>
<div style="left:961px;top:125px;width:1px;height:30px;background:#5e5e5e;"></div>
<span style="left:994.83px;top:134.00px;font-size:16px;line-height:16px;color:#a1a3a6;letter-spacing:-0.259px;transform:scaleX(0.93);transform-origin:0 0;">Find Files</span>
<div style="left:1065px;top:125px;width:1px;height:30px;background:#5e5e5e;"></div>
<div style="left:589px;top:164px;width:4px;height:1px;background:#8c8c8c;"></div>
<div style="left:589px;top:167px;width:4px;height:1px;background:#8c8c8c;"></div>
<div style="left:589px;top:170px;width:4px;height:1px;background:#8c8c8c;"></div>
<div style="left:589px;top:173px;width:4px;height:1px;background:#8c8c8c;"></div>
<div style="left:589px;top:176px;width:4px;height:1px;background:#8c8c8c;"></div>
<div style="left:589px;top:179px;width:4px;height:1px;background:#8c8c8c;"></div>
<span style="left:624.83px;top:166.00px;font-size:16px;line-height:16px;color:#a1a3a6;letter-spacing:0.563px;transform:scaleX(0.93);transform-origin:0 0;">Download</span>
<svg style="left:702.7px;top:171.0px;" width="7.6" height="4" viewBox="0 0 7.6 4"><polygon points="0,0 7.6,0 3.8,4" fill="#adadad"/></svg>
<div style="left:718px;top:158px;width:1px;height:29px;background:#5e5e5e;"></div>
<span style="left:752.33px;top:166.00px;font-size:16px;line-height:16px;color:#a1a3a6;letter-spacing:0.427px;transform:scaleX(0.93);transform-origin:0 0;">Edit</span>
<svg style="left:786.2px;top:171.0px;" width="7.6" height="4" viewBox="0 0 7.6 4"><polygon points="0,0 7.6,0 3.8,4" fill="#adadad"/></svg>
<span style="left:881.83px;top:166.00px;font-size:16px;line-height:16px;color:#a1a3a6;letter-spacing:0.003px;transform:scaleX(0.93);transform-origin:0 0;">Properties</span>
<div style="left:958px;top:158px;width:1px;height:29px;background:#5e5e5e;"></div>
<span style="left:992.83px;top:166.00px;font-size:16px;line-height:16px;color:#a1a3a6;letter-spacing:0.196px;transform:scaleX(0.93);transform-origin:0 0;">New</span>
<svg style="left:1027.2px;top:171.0px;" width="7.6" height="4" viewBox="0 0 7.6 4"><polygon points="0,0 7.6,0 3.8,4" fill="#adadad"/></svg>
<div style="left:1046px;top:164px;width:4px;height:1px;background:#8c8c8c;"></div>
<div style="left:1046px;top:167px;width:4px;height:1px;background:#8c8c8c;"></div>
<div style="left:1046px;top:170px;width:4px;height:1px;background:#8c8c8c;"></div>
<div style="left:1046px;top:173px;width:4px;height:1px;background:#8c8c8c;"></div>
<div style="left:1046px;top:176px;width:4px;height:1px;background:#8c8c8c;"></div>
<div style="left:1046px;top:179px;width:4px;height:1px;background:#8c8c8c;"></div>
<div style="left:585px;top:187px;width:595px;height:27px;background:#c1cedd;"></div>
<div style="left:586px;top:214px;width:595px;height:736px;background:#404040;border:1px solid #f2f2f2;"></div>
<div style="left:587px;top:215px;width:593px;height:26px;background:#202020;"></div>
<div style="left:774px;top:215px;width:1px;height:26px;background:#adadad;"></div>
<div style="left:862px;top:215px;width:1px;height:26px;background:#adadad;"></div>
<div style="left:1050px;top:215px;width:1px;height:26px;background:#adadad;"></div>
<div style="left:1149px;top:215px;width:1px;height:26px;background:#adadad;"></div>
<span style="left:1056.33px;top:222.00px;font-size:16px;line-height:16px;color:#ffffff;letter-spacing:0.033px;transform:scaleX(0.93);transform-origin:0 0;">Rights</span>
<span style="left:1155.83px;top:222.00px;font-size:16px;line-height:16px;color:#ffffff;letter-spacing:0.407px;transform:scaleX(0.93);transform-origin:0 0;">Owner</span>
<svg style="left:675px;top:215px;" width="10" height="5" viewBox="0 0 10 5"><polyline points="0.5,5 5,0.7 9.5,5" fill="none" stroke="#d8d8d8" stroke-width="1"/></svg>
<svg style="left:7px;top:68px;" width="24" height="26" viewBox="0 0 24 26"><rect x="8" y="2.6" width="13.2" height="2.6" fill="#3d8cf4"/><rect x="9" y="5.2" width="11" height="5.6" fill="#3d434d"/><path d="M9.8,6.4 L13,8.1 L9.8,9.8" fill="none" stroke="#fff" stroke-width="1.5"/><defs><linearGradient id="scr" x1="0" y1="0" x2="1" y2="1"><stop offset="0" stop-color="#c4defd"/><stop offset="0.55" stop-color="#8bbcfa"/><stop offset="0.6" stop-color="#5fa2f6"/><stop offset="1" stop-color="#4b93f2"/></linearGradient></defs><rect x="1.6" y="11.6" width="11.8" height="7.6" fill="url(#scr)"/><rect x="1.2" y="19.2" width="12.6" height="1.2" fill="#30353c"/><rect x="6" y="20.4" width="3" height="1.3" fill="#2a2e34"/><rect x="3.4" y="21.6" width="8.2" height="1.1" fill="#343a42"/></svg>
<svg style="left:385px;top:37px;" width="24" height="24" viewBox="0 0 24 24"><defs><radialGradient id="gl" cx="0.42" cy="0.42" r="0.65"><stop offset="0" stop-color="#86c8ff"/><stop offset="1" stop-color="#2b7de8"/></radialGradient></defs><circle cx="12" cy="11.7" r="8.4" fill="url(#gl)"/><path d="M5,8.4 Q7.4,5 10.6,5.6 Q10.6,8.6 8.8,10.4 Q9.8,13.2 7.6,14.4 Q4.6,12.4 5,8.4 Z" fill="#63d25e"/><path d="M13.6,10.8 Q16.8,9.4 19.6,11 Q20.2,14.8 17,18 Q15.2,16.2 15.8,14 Q13.4,13 13.6,10.8 Z" fill="#72d862"/><path d="M7.4,7 C9.4,3.2 14.2,2.4 17.2,4.6 L19.6,1.8 L22,1.8 L22,9.4 L14.4,9.4 L14.4,7.6 L16,7.2 C13.8,5.6 11.2,6.2 9.8,8.4 Z" fill="#fbd13c" stroke="#dc9a14" stroke-width="0.6"/><path d="M7.4,7 C9.4,3.2 14.2,2.4 17.2,4.6 L19.6,1.8 L22,1.8 L22,9.4 L14.4,9.4 L14.4,7.6 L16,7.2 C13.8,5.6 11.2,6.2 9.8,8.4 Z" fill="#fbd13c" stroke="#dc9a14" stroke-width="0.6" transform="rotate(180 12 11.7)"/></svg>
<svg style="left:1px;top:132px;" width="20" height="18" viewBox="0 0 20 18"><path d="M1,3.2 L1,1.8 Q1,1 1.8,1 L8,1 L9,2.6 L17.799999999999997,2.6 Q18.4,2.6 18.4,3.4 L18.4,17.2 L1,17.2 Z" fill="#dcaa2c"/><rect x="1.9" y="4" width="15.599999999999998" height="12.299999999999999" fill="#f9e58c"/><rect x="1.9" y="4" width="15.599999999999998" height="1.2" fill="#fdf3b8"/><rect x="1.9" y="12.6" width="15.6" height="1" fill="#e6bf45"/><rect x="1.9" y="14.6" width="15.6" height="1" fill="#e6bf45"/><path d="M7.2,7 L11.6,14.4" stroke="#1a1a1a" stroke-width="1.6"/></svg>
<svg style="left:27.5px;top:129.5px;" width="21" height="20" viewBox="0 0 21 20"><path d="M3,9 L3,19 L18,19 L18,9 L10.5,2.5 Z" fill="#e3ecf9" stroke="#9db4d6" stroke-width="0.8"/><path d="M0.6,10.2 L10.5,0.8 L20.4,10.2 L18.8,11.4 L10.5,3.6 L2.2,11.4 Z" fill="#5f7fa8"/><rect x="8.4" y="13" width="4.2" height="6" fill="#2f6fd2"/></svg>
<svg style="left:55.4px;top:129.4px;" width="20" height="21" viewBox="0 0 20 21"><path d="M0.4,10.4 C0.4,4 5,0.8 10,0.8 C12.4,0.8 14.2,1.6 15.6,2.7 L18.8,0 L18.8,9.4 L9.4,9.4 L12.5,6.3 C11.8,5.7 10.8,5.4 9.8,5.4 C7,5.4 5.3,7.6 5.3,10.4 Z" fill="#46c846"/><path d="M0.4,10.4 C0.4,4 5,0.8 10,0.8 C12.4,0.8 14.2,1.6 15.6,2.7 L18.8,0 L18.8,9.4 L9.4,9.4 L12.5,6.3 C11.8,5.7 10.8,5.4 9.8,5.4 C7,5.4 5.3,7.6 5.3,10.4 Z" fill="#27a827" transform="rotate(180 9.8 10.4)"/></svg>
<svg style="left:90px;top:129.6px;" width="21" height="21" viewBox="0 0 21 21"><path d="M0.2,2.6 L0.2,1.2000000000000002 Q0.2,0.4 1.0,0.4 L3.8,0.4 L4.8,2.0 L9.6,2.0 Q10.2,2.0 10.2,2.8 L10.2,8.8 L0.2,8.8 Z" fill="#dcaa2c"/><rect x="1.1" y="3.4" width="8.2" height="4.5" fill="#f9e58c"/><rect x="1.1" y="3.4" width="8.2" height="1.2" fill="#fdf3b8"/><rect x="1.1" y="5" width="8.2" height="1" fill="#caa02c"/><path d="M10.2,13.8 L10.2,12.4 Q10.2,11.6 11.0,11.6 L13.799999999999999,11.6 L14.799999999999999,13.2 L19.599999999999998,13.2 Q20.2,13.2 20.2,14.0 L20.2,20.2 L10.2,20.2 Z" fill="#dcaa2c"/><rect x="11.1" y="14.6" width="8.2" height="4.699999999999999" fill="#f9e58c"/><rect x="11.1" y="14.6" width="8.2" height="1.2" fill="#fdf3b8"/><rect x="11.1" y="16.2" width="8.2" height="1" fill="#caa02c"/><path d="M3.5,10 L3.5,16.5 L9.5,16.5" fill="none" stroke="#0c0c0c" stroke-width="1" stroke-dasharray="1,1"/></svg>
<svg style="left:1072px;top:129.6px;" width="21" height="21" viewBox="0 0 21 21"><path d="M0.2,2.6 L0.2,1.2000000000000002 Q0.2,0.4 1.0,0.4 L3.8,0.4 L4.8,2.0 L9.6,2.0 Q10.2,2.0 10.2,2.8 L10.2,8.8 L0.2,8.8 Z" fill="#dcaa2c"/><rect x="1.1" y="3.4" width="8.2" height="4.5" fill="#f9e58c"/><rect x="1.1" y="3.4" width="8.2" height="1.2" fill="#fdf3b8"/><rect x="1.1" y="5" width="8.2" height="1" fill="#caa02c"/><path d="M10.2,13.8 L10.2,12.4 Q10.2,11.6 11.0,11.6 L13.799999999999999,11.6 L14.799999999999999,13.2 L19.599999999999998,13.2 Q20.2,13.2 20.2,14.0 L20.2,20.2 L10.2,20.2 Z" fill="#dcaa2c"/><rect x="11.1" y="14.6" width="8.2" height="4.699999999999999" fill="#f9e58c"/><rect x="11.1" y="14.6" width="8.2" height="1.2" fill="#fdf3b8"/><rect x="11.1" y="16.2" width="8.2" height="1" fill="#caa02c"/><path d="M3.5,10 L3.5,16.5 L9.5,16.5" fill="none" stroke="#0c0c0c" stroke-width="1" stroke-dasharray="1,1"/></svg>
<svg style="left:2px;top:161px;" width="23" height="21" viewBox="0 0 23 21"><path d="M1,6.6000000000000005 L1,5.2 Q1,4.4 1.8,4.4 L7.6,4.4 L8.6,6.0 L17.0,6.0 Q17.6,6.0 17.6,6.800000000000001 L17.6,19.8 L1,19.8 Z" fill="#dcaa2c"/><rect x="1.9" y="7.4" width="14.8" height="11.5" fill="#f9e58c"/><rect x="1.9" y="7.4" width="14.8" height="1.2" fill="#fdf3b8"/><rect x="1.9" y="13.4" width="14.8" height="1" fill="#e6bf45"/><rect x="1.9" y="15.6" width="14.8" height="1" fill="#e6bf45"/><rect x="1.9" y="17.6" width="14.8" height="1" fill="#e6bf45"/><path d="M16.6,1 L17.6,3.8 L20.4,3 L19.2,5.6 L21.4,7.2 L18.6,7.6 L18.4,10.4 L16.6,8.4 L14.4,10 L14.6,7.4 L12,6.6 L14.4,5.2 L13.6,2.6 L15.8,4 Z" fill="#f4f8ff" stroke="#b9c9e4" stroke-width="0.5"/></svg>
<div style="left:94px;top:163px;width:18px;height:18px;background:#f7f9fc;border:1px solid #6c8dc2;"></div>
<div style="left:98px;top:171px;width:10px;height:2px;background:#4f6e9f;"></div>
<div style="left:102px;top:167px;width:2px;height:10px;background:#4f6e9f;"></div>
<div style="left:121px;top:163px;width:18px;height:18px;background:#8b8b8b;"></div>
<div style="left:125.5px;top:171.3px;width:9px;height:1.4px;background:#7c7c7c;"></div>
<div style="left:148px;top:163px;width:18px;height:18px;background:#f7f9fc;border:1px solid #6c8dc2;"></div>
<svg style="left:148px;top:163px;" width="18" height="18" viewBox="0 0 18 18"><path d="M4,4.2 L9,14.2 L14,4.2 M5.4,7.4 L12.6,7.4" fill="none" stroke="#4f6e9f" stroke-width="2.2" stroke-linecap="round" stroke-linejoin="round"/></svg>
<svg style="left:601px;top:132px;" width="15" height="20" viewBox="0 0 15 20"><path d="M1,1.2 L10.6,1.2 L10.6,9.4 L13.2,9.4 L13.2,16 L4.4,16 L4.4,18.6 L2.2,16 L1,16 Z" fill="#7c7c7c"/></svg>
<svg style="left:659.5px;top:129.5px;" width="21" height="20" viewBox="0 0 21 20"><path d="M1,5 L1,19 L18,19 L18,5 L10,5 L8.4,3.2 L2,3.2 Z" fill="#666666"/><path d="M9.6,3.6 Q12,0.2 15.4,1 L17.6,1 L17.6,4.6 L9.6,4.6 Z" fill="#7c7c7c"/><path d="M2.6,8 L20.4,8 L18.6,19 L1,19 Z" fill="#7c7c7c"/><path d="M2.4,11 H19.6 M2,13.6 H19.2 M1.6,16.2 H18.8" stroke="#8a8a8a" stroke-width="0.8"/></svg>
<svg style="left:702px;top:131px;" width="20" height="17" viewBox="0 0 20 17"><rect x="0" y="0" width="20" height="17" fill="#7c7c7c"/><rect x="0" y="0" width="20" height="3" fill="#8a8a8a"/><path d="M4.4,5 L15.6,5 L11.2,10 L11.2,15 L8.8,15 L8.8,10 Z" fill="#949494" stroke="#6c6c6c" stroke-width="0.6"/></svg>
<svg style="left:756px;top:134px;" width="20" height="13" viewBox="0 0 20 13"><path d="M0,6.5 L9.4,0 L9.4,4 L20,4 L20,9 L9.4,9 L9.4,13 Z" fill="#7c7c7c"/></svg>
<svg style="left:798px;top:134px;" width="20" height="13" viewBox="0 0 20 13"><path d="M20,6.5 L10.6,0 L10.6,4 L0,4 L0,9 L10.6,9 L10.6,13 Z" fill="#7c7c7c"/></svg>
<svg style="left:853px;top:133px;" width="18" height="17" viewBox="0 0 18 17"><path d="M0.2,16 L0.2,1.4 Q0.2,0.4 1.2,0.4 L6.4,0.4 L7.8,2.2 L16.8,2.2 Q17.6,2.2 17.6,3 L17.6,16 Z" fill="#7c7c7c"/><rect x="0.2" y="4.2" width="17.4" height="1" fill="#8c8c8c"/><path d="M6.6,12.6 L6.6,8 M4.6,9.6 L6.6,7.4 L8.6,9.6 M6.6,12.6 L13,12.6" fill="none" stroke="#686868" stroke-width="1.3"/></svg>
<svg style="left:880px;top:133px;" width="18" height="17" viewBox="0 0 18 17"><path d="M0.2,16 L0.2,1.4 Q0.2,0.4 1.2,0.4 L6.4,0.4 L7.8,2.2 L16.8,2.2 Q17.6,2.2 17.6,3 L17.6,16 Z" fill="#7c7c7c"/><rect x="0.2" y="4.2" width="17.4" height="1" fill="#8c8c8c"/><path d="M10.4,6.6 L7.4,13.2" stroke="#686868" stroke-width="1.5"/><path d="M0.6,12 H17.2 M0.6,14.2 H17.2" stroke="#868686" stroke-width="0.7"/></svg>
<svg style="left:905.5px;top:129.5px;" width="21" height="20" viewBox="0 0 21 20"><path d="M3,9 L3,19 L18,19 L18,9 L10.5,2.5 Z" fill="#7c7c7c" stroke="#7c7c7c" stroke-width="0.8"/><path d="M0.6,10.2 L10.5,0.8 L20.4,10.2 L18.8,11.4 L10.5,3.6 L2.2,11.4 Z" fill="#929292"/><rect x="8.4" y="13" width="4.2" height="6" fill="#8e8e8e"/></svg>
<svg style="left:933.4px;top:129.3px;" width="20" height="21" viewBox="0 0 20 21"><path d="M0.4,10.4 C0.4,4 5,0.8 10,0.8 C12.4,0.8 14.2,1.6 15.6,2.7 L18.8,0 L18.8,9.4 L9.4,9.4 L12.5,6.3 C11.8,5.7 10.8,5.4 9.8,5.4 C7,5.4 5.3,7.6 5.3,10.4 Z" fill="#848484"/><path d="M0.4,10.4 C0.4,4 5,0.8 10,0.8 C12.4,0.8 14.2,1.6 15.6,2.7 L18.8,0 L18.8,9.4 L9.4,9.4 L12.5,6.3 C11.8,5.7 10.8,5.4 9.8,5.4 C7,5.4 5.3,7.6 5.3,10.4 Z" fill="#787878" transform="rotate(180 9.8 10.4)"/></svg>
<svg style="left:968px;top:131px;" width="21" height="19" viewBox="0 0 21 19"><path d="M0.4,0.4 L10.6,0.4 L13.8,3.6 L13.8,17.2 L0.4,17.2 Z" fill="#7c7c7c"/><path d="M2,5 H9 M2,7.4 H7.6 M2,9.8 H7 M2,12.2 H7.6 M2,14.6 H9.6" stroke="#8e8e8e" stroke-width="0.8"/><circle cx="11.6" cy="9.4" r="4.3" fill="#8a8a8a" stroke="#9a9a9a" stroke-width="1.2"/><path d="M14.8,12.8 L19.4,17.6" stroke="#8a8a8a" stroke-width="2.2" stroke-linecap="round"/></svg>
<svg style="left:598.5px;top:161.5px;" width="19" height="21" viewBox="0 0 19 21"><path d="M0.4,5.6 L7.6,5.6 L7.6,20.4 L0.4,20.4 Z" fill="#7a7a7a"/><path d="M6.8,0.4 L15.6,0.4 L18.6,3.4 L18.6,14.6 L16.6,16.6 L18,18 L18,20.4 L6.8,20.4 Z" fill="#828282"/><path d="M8.6,3.6 H13.6 M8.6,5.6 H16 M8.6,7.6 H16.4 M8.6,9.6 H14.6 M8.6,11.6 H16 M9.6,13.6 H13" stroke="#6c6c6c" stroke-width="0.7"/><path d="M2,8.4 H6 M2,10.6 H6 M2,12.8 H6 M2,15 H6 M2,17.2 H6" stroke="#8c8c8c" stroke-width="0.7"/></svg>
<svg style="left:724.5px;top:162px;" width="21" height="20" viewBox="0 0 21 20"><path d="M0.6,1 L13.6,1 L16.4,3.6 L16.4,19.2 L0.6,19.2 Z" fill="#7c7c7c"/><path d="M17.4,0.8 L20.6,3.6 L8.6,16.6 L4.8,17.8 L6,14 Z" fill="#8b8b8b" stroke="#666666" stroke-width="0.6"/><circle cx="19" cy="2.6" r="1.7" fill="#8e8e8e"/></svg>
<svg style="left:802px;top:163px;" width="18" height="18" viewBox="0 0 18 18"><path d="M2.6,2.6 L15.4,15.4 M15.4,2.6 L2.6,15.4" stroke="#727272" stroke-width="4.8" stroke-linecap="round"/></svg>
<svg style="left:828.5px;top:161.6px;" width="20" height="20" viewBox="0 0 20 20"><path d="M1,0.6 L14,0.6 L14,16 L1,16 Z" fill="#7c7c7c"/><path d="M16.2,0.8 L19.6,3.6 L9.8,16.6 L6,17.8 L7,14 Z" fill="#8b8b8b" stroke="#666666" stroke-width="0.6"/><circle cx="18" cy="2.6" r="1.7" fill="#8e8e8e"/><rect x="0.4" y="17.8" width="7.6" height="1.2" fill="#9c9c9c"/></svg>
<svg style="left:855.6px;top:162px;" width="20" height="20" viewBox="0 0 20 20"><path d="M0.4,0.4 L9.6,0.4 L13,3.8 L13,15.4 L0.4,15.4 Z" fill="#7c7c7c"/><rect x="7.2" y="7.8" width="12.2" height="11.8" fill="#868686" stroke="#202020" stroke-width="0.5"/><path d="M9.6,13.6 L12,16.4 L17,9.8" fill="none" stroke="#6a6a6a" stroke-width="1.7"/></svg>
<svg style="left:964px;top:161px;" width="22" height="21" viewBox="0 0 22 21"><path d="M0.8,20 L0.8,5.6 Q0.8,4.6 1.8,4.6 L7.4,4.6 L8.8,6.4 L16.8,6.4 L16.8,20 Z" fill="#7c7c7c"/><path d="M0.8,12.2 H16.8 M0.8,14.6 H16.8 M0.8,17 H16.8" stroke="#888888" stroke-width="0.7"/><path d="M16.4,0.6 L17.4,3.6 L20.6,2.8 L19.2,5.6 L21.6,7.4 L18.6,7.8 L18.4,10.8 L16.4,8.6 L14.2,10.4 L14.4,7.6 L11.6,6.6 L14.2,5.2 L13.4,2.4 L15.6,3.8 Z" fill="#8a8a8a"/></svg>
<div style="left:1056px;top:163px;width:18px;height:18px;background:#8a8a8a;"></div>
<div style="left:1060px;top:171.2px;width:10px;height:1.6px;background:#777777;"></div>
<div style="left:1064.2px;top:167px;width:1.6px;height:10px;background:#777777;"></div>
<div style="left:1083px;top:163px;width:18px;height:18px;background:#8a8a8a;"></div>
<div style="left:1087px;top:171.2px;width:10px;height:1.6px;background:#777777;"></div>
<div style="left:1110px;top:163px;width:18px;height:18px;background:#8a8a8a;"></div>
<svg style="left:1110px;top:163px;" width="18" height="18" viewBox="0 0 18 18"><path d="M4,4.2 L9,14.2 L14,4.2 M5.4,7.4 L12.6,7.4" fill="none" stroke="#777777" stroke-width="1.6" stroke-linecap="round" stroke-linejoin="round"/></svg>
<div style="left:212px;top:221px;width:782px;height:528px;background:#f0f0f0;box-shadow:0 6px 14px 0 rgba(0,0,0,0.36);border-right:1px solid #fbfbfb;border-bottom:1px solid #fbfbfb;"></div>
<div style="left:212px;top:221px;width:782px;height:37px;background:#ffffff;"></div>
<span style="left:245.33px;top:233.00px;font-size:16px;line-height:16px;color:#000000;letter-spacing:0.517px;transform:scaleX(0.93);transform-origin:0 0;">Login</span>
<div style="left:841px;top:238px;width:12px;height:1px;background:#000000;"></div>
<div style="left:899px;top:233px;width:12px;height:12px;background:transparent;border:1px solid #c6c6c6;"></div>
<svg style="left:958px;top:233px;" width="12" height="12" viewBox="0 0 12 12"><path d="M0.3,0.3 L11.7,11.7 M11.7,0.3 L0.3,11.7" stroke="#000" stroke-width="1.1" fill="none"/></svg>
<div style="left:226px;top:273px;width:311px;height:431px;background:#ffffff;border:1px solid #828790;"></div>
<div style="left:515px;top:274px;width:21px;height:429px;background:#f0f0f0;"></div>
<div style="left:515px;top:296px;width:19px;height:311px;background:#cdcdcd;"></div>
<svg style="left:519px;top:281px;" width="11" height="8" viewBox="0 0 11 8"><polyline points="1,6.5 5.5,2 10,6.5" fill="none" stroke="#5a5a5a" stroke-width="1.8"/></svg>
<svg style="left:519px;top:687px;" width="11" height="8" viewBox="0 0 11 8"><polyline points="1,1.5 5.5,6 10,1.5" fill="none" stroke="#5a5a5a" stroke-width="1.8"/></svg>
<span style="left:255.41px;top:279.00px;font-size:13px;line-height:13px;color:#000000;letter-spacing:0.020px;">New Site</span>
<div style="left:229px;top:679px;width:1px;height:18px;background:#dfe8f5;"></div>
<div style="left:553px;top:282px;width:427px;height:240px;background:transparent;border:1px solid #dcdcdc;"></div>
<div style="left:558px;top:276px;width:47.5px;height:12px;background:#f0f0f0;"></div>
<span style="left:559.91px;top:275.00px;font-size:13px;line-height:13px;color:#000000;letter-spacing:-0.347px;">Session</span>
<span style="left:566.41px;top:302.00px;font-size:13px;line-height:13px;color:#000000;letter-spacing:0.096px;">File protocol:</span>
<span style="left:752.41px;top:302.00px;font-size:13px;line-height:13px;color:#000000;letter-spacing:-0.088px;">Encryption:</span>
<div style="left:567px;top:321px;width:168px;height:24px;background:#f0f0f0;border:1px solid #7a7a7a;"></div>
<div style="left:753px;top:321px;width:213px;height:24px;background:#f0f0f0;border:1px solid #7a7a7a;"></div>
<span style="left:569.41px;top:326.00px;font-size:13px;line-height:13px;color:#000000;letter-spacing:-0.696px;">FTP</span>
<span style="left:755.91px;top:326.00px;font-size:13px;line-height:13px;color:#000000;letter-spacing:-0.129px;">No encryption</span>
<span style="left:566.41px;top:364.00px;font-size:13px;line-height:13px;color:#000000;letter-spacing:0.021px;">Host name:</span>
<span style="left:865.41px;top:364.00px;font-size:13px;line-height:13px;color:#000000;letter-spacing:0.138px;">Port number:</span>
<div style="left:567px;top:383px;width:290px;height:24px;background:#f0f0f0;border:1px solid #7a7a7a;"></div>
<div style="left:865px;top:383px;width:101px;height:24px;background:#f0f0f0;border:1px solid #7a7a7a;"></div>
<span style="left:569.41px;top:388.00px;font-size:13px;line-height:13px;color:#000000;letter-spacing:0.697px;">ftp.</span>
<div style="left:589px;top:386px;width:91px;height:18px;background:#ffffff;"></div>
<span style="left:679.91px;top:388.00px;font-size:13px;line-height:13px;color:#000000;letter-spacing:0.054px;">com</span>
<span style="left:946.53px;top:388.00px;font-size:13px;line-height:13px;color:#000000;">21</span>
<span style="left:566.41px;top:425.00px;font-size:13px;line-height:13px;color:#000000;letter-spacing:-0.004px;">User name:</span>
<span style="left:770.41px;top:425.00px;font-size:13px;line-height:13px;color:#000000;letter-spacing:-0.004px;">Password:</span>
<div style="left:567px;top:444px;width:195px;height:24px;background:#f0f0f0;border:1px solid #7a7a7a;"></div>
<div style="left:770px;top:444px;width:196px;height:24px;background:#f0f0f0;border:1px solid #7a7a7a;"></div>
<div style="left:570px;top:447px;width:119px;height:16px;background:#ffffff;"></div>
<span style="left:688.41px;top:449.00px;font-size:13px;line-height:13px;color:#000000;letter-spacing:0.166px;">.com</span>
<div style="left:773.50px;top:452.70px;width:6px;height:6px;border-radius:50%;background:#000;"></div>
<div style="left:781.56px;top:452.70px;width:6px;height:6px;border-radius:50%;background:#000;"></div>
<div style="left:789.62px;top:452.70px;width:6px;height:6px;border-radius:50%;background:#000;"></div>
<div style="left:797.68px;top:452.70px;width:6px;height:6px;border-radius:50%;background:#000;"></div>
<div style="left:805.74px;top:452.70px;width:6px;height:6px;border-radius:50%;background:#000;"></div>
<div style="left:813.80px;top:452.70px;width:6px;height:6px;border-radius:50%;background:#000;"></div>
<div style="left:821.86px;top:452.70px;width:6px;height:6px;border-radius:50%;background:#000;"></div>
<div style="left:829.92px;top:452.70px;width:6px;height:6px;border-radius:50%;background:#000;"></div>
<div style="left:837.98px;top:452.70px;width:6px;height:6px;border-radius:50%;background:#000;"></div>
<div style="left:846.04px;top:452.70px;width:6px;height:6px;border-radius:50%;background:#000;"></div>
<div style="left:854.10px;top:452.70px;width:6px;height:6px;border-radius:50%;background:#000;"></div>
<div style="left:862.16px;top:452.70px;width:6px;height:6px;border-radius:50%;background:#000;"></div>
<div style="left:870.22px;top:452.70px;width:6px;height:6px;border-radius:50%;background:#000;"></div>
<div style="left:878.28px;top:452.70px;width:6px;height:6px;border-radius:50%;background:#000;"></div>
<div style="left:886.34px;top:452.70px;width:6px;height:6px;border-radius:50%;background:#000;"></div>
<div style="left:894.40px;top:452.70px;width:6px;height:6px;border-radius:50%;background:#000;"></div>
<div style="left:568px;top:480px;width:118px;height:28px;background:#e1e1e1;border:1px solid #adadad;"></div>
<span style="left:615.41px;top:488.00px;font-size:13px;line-height:13px;color:#000000;letter-spacing:0.088px;">Edit</span>
<div style="left:846px;top:480px;width:119px;height:28px;background:#cccccc;border:1px solid #bfbfbf;"></div>
<span style="left:861.41px;top:488.00px;font-size:13px;line-height:13px;color:#838383;letter-spacing:-0.049px;">Advanced...</span>
<div style="left:946px;top:482px;width:1px;height:24px;background:#a0a0a0;"></div>
<div style="left:947px;top:482px;width:1px;height:24px;background:#f4f4f4;"></div>
<svg style="left:950px;top:491px;" width="12" height="7" viewBox="0 0 12 7"><polygon points="1,1 12,1 6.5,7" fill="#ffffff"/><polygon points="0,0 11,0 5.5,6" fill="#a0a0a0"/></svg>
<div style="left:227px;top:712px;width:118px;height:29px;background:#e1e1e1;border:1px solid #adadad;"></div>
<span style="left:259.42px;top:720.00px;font-size:13px;line-height:13px;color:#000000;letter-spacing:0.578px;">Tools</span>
<svg style="left:328px;top:723px;" width="11" height="6" viewBox="0 0 11 6"><polygon points="0,0 11,0 5.5,6" fill="#000"/></svg>
<div style="left:417px;top:712px;width:119px;height:29px;background:#e1e1e1;border:1px solid #adadad;"></div>
<span style="left:443.42px;top:720.00px;font-size:13px;line-height:13px;color:#000000;letter-spacing:-0.163px;">Manage</span>
<svg style="left:519px;top:723px;" width="11" height="6" viewBox="0 0 11 6"><polygon points="0,0 11,0 5.5,6" fill="#000"/></svg>
<div style="left:643px;top:712px;width:119px;height:29px;background:#e1e1e1;border:2px solid #0078d7;"></div>
<span style="left:685.91px;top:720.00px;font-size:13px;line-height:13px;color:#000000;letter-spacing:-0.286px;">Login</span>
<div style="left:743.5px;top:715px;width:1px;height:23px;background:#6c6c6c;"></div>
<div style="left:744.5px;top:715px;width:1px;height:23px;background:#f4f4f4;"></div>
<svg style="left:747px;top:723px;" width="11" height="6" viewBox="0 0 11 6"><polygon points="0,0 11,0 5.5,6" fill="#000"/></svg>
<div style="left:771px;top:712px;width:99px;height:29px;background:#e1e1e1;border:1px solid #adadad;"></div>
<span style="left:804.91px;top:720.00px;font-size:13px;line-height:13px;color:#000000;letter-spacing:-0.395px;">Close</span>
<div style="left:880px;top:712px;width:99px;height:29px;background:#e1e1e1;border:1px solid #adadad;"></div>
<span style="left:916.91px;top:720.00px;font-size:13px;line-height:13px;color:#000000;letter-spacing:-0.360px;">Help</span>
<svg style="left:220px;top:228px;" width="22" height="22" viewBox="0 0 22 22"><polygon points="1,1 8.9,1 6.4,3.6 9.6,7 7,9.6 3.6,6.4 1,8.9" fill="#1463f2"/><defs><linearGradient id="lk" x1="0" y1="0" x2="1" y2="0"><stop offset="0" stop-color="#3b3b3b"/><stop offset="0.5" stop-color="#5a5a5a"/><stop offset="0.75" stop-color="#7a7a7a"/><stop offset="1" stop-color="#4a4a4a"/></linearGradient></defs><path d="M7.6,10 L7.6,6.2 Q7.6,3 11.6,3 Q15.8,3 15.8,6.2 L15.8,10" fill="none" stroke="#a9a9a9" stroke-width="2"/><rect x="5.2" y="9.6" width="12.6" height="9.2" rx="0.8" fill="url(#lk)"/><polygon points="21.1,13 21.1,21.1 13,21.1 15.7,18.5 12,14.8 14.8,12 18.5,15.7" fill="#12b312"/></svg>
<svg style="left:231px;top:275px;" width="21" height="20" viewBox="0 0 21 20"><defs><linearGradient id="ms" x1="0" y1="0" x2="1" y2="1"><stop offset="0" stop-color="#7eaaf2"/><stop offset="0.5" stop-color="#8db6f6"/><stop offset="0.52" stop-color="#6b9dee"/><stop offset="1" stop-color="#7faef4"/></linearGradient></defs><rect x="1.1" y="2.4" width="17.6" height="12.6" rx="0.8" fill="#2c3c54"/><rect x="2.3" y="3.6" width="15.2" height="10.2" fill="url(#ms)"/><rect x="14" y="13" width="3" height="0.9" fill="#3fd03f"/><rect x="8" y="15" width="4" height="1.8" fill="#2c3c54"/><rect x="5.2" y="16.6" width="9.8" height="2" rx="0.8" fill="#5b7496" stroke="#2c3c54" stroke-width="0.7"/><path d="M15.4,0.2 L16.5,2.5 L19,2 L18,4.4 L20,6 L17.6,6.6 L17.4,9 L15.4,7.4 L13.4,9 L13.2,6.6 L10.8,6 L12.8,4.4 L11.8,2 L14.3,2.5 Z" fill="#ffffff" stroke="#8ea0bb" stroke-width="0.7"/></svg>
<svg style="left:666px;top:718px;" width="18" height="18" viewBox="0 0 18 18"><defs><linearGradient id="lg" x1="0" y1="0" x2="0" y2="1"><stop offset="0" stop-color="#4cb52e"/><stop offset="1" stop-color="#2f8f1a"/></linearGradient></defs><rect x="0" y="0" width="18" height="18" rx="2.4" fill="url(#lg)"/><path d="M5.2,5.6 L5.2,2.4 L15,2.4 L15,15.6 L5.2,15.6 L5.2,12.4" fill="none" stroke="#fff" stroke-width="1.5"/><path d="M1.6,7.8 L7.8,7.8 L7.8,4.8 L12.6,9 L7.8,13.2 L7.8,10.2 L1.6,10.2 Z" fill="#fff"/></svg>
<div style="left:194px;top:199px;width:829px;height:599px;border:4px solid #ff0000;"></div>
</body></html>
